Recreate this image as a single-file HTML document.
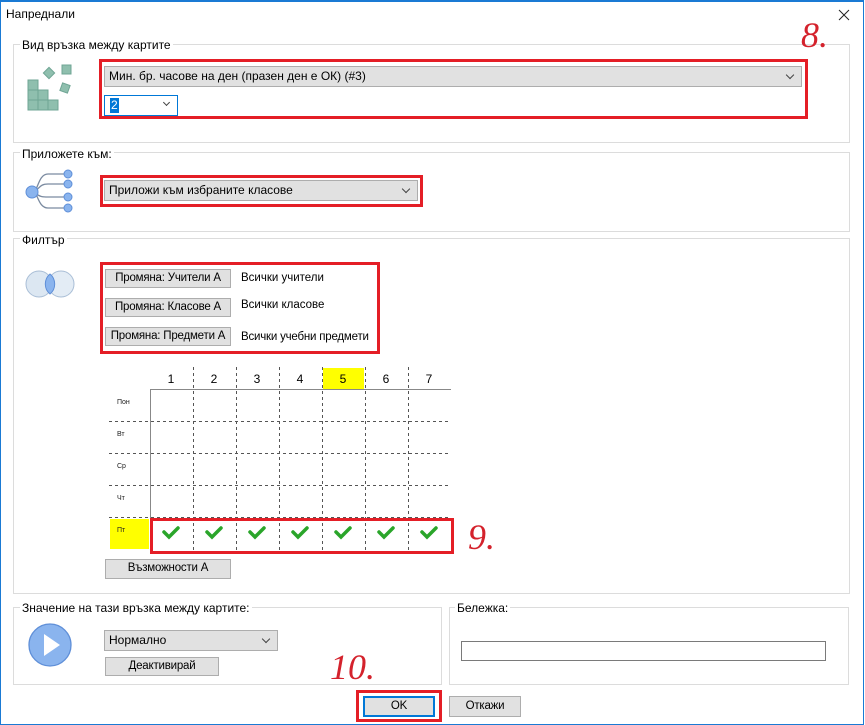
<!DOCTYPE html>
<html><head><meta charset="utf-8"><style>
*{box-sizing:border-box;margin:0;padding:0}
body{width:865px;height:725px;background:#fff;font-family:"Liberation Sans",sans-serif;font-size:12px;color:#000;position:relative;overflow:hidden}
.a{position:absolute}
.grp{position:absolute;border:1px solid #dcdcdc}
.lbl{position:absolute;background:#fff;padding:0 2px;font-size:12px;line-height:14px;white-space:nowrap}
.btn{position:absolute;background:#e1e1e1;border:1px solid #adadad;text-align:center;font-size:11.5px;line-height:17px;white-space:nowrap;letter-spacing:-0.2px}
.cmb{position:absolute;background:#e1e1e1;border:1px solid #adadad;font-size:12px;line-height:19px;padding-left:4px;white-space:nowrap}
.cmb:after{content:"";position:absolute;right:8px;top:5px;width:5px;height:5px;border-right:1px solid #444;border-bottom:1px solid #444;transform:rotate(45deg)}
.red{position:absolute;border:3px solid #e41e26}
.txt{position:absolute;font-size:12px;white-space:nowrap}
.num{position:absolute;font-family:"Liberation Serif",serif;font-style:italic;color:#d4222c;font-size:36px;line-height:30px}
</style></head><body>
<div class="a" style="left:0;top:0;width:864px;height:725px;border:1px solid #1a7ad4;border-top:2px solid #1a7ad4"></div>
<div class="txt" style="left:6px;top:7px">Напреднали</div>
<svg class="a" style="left:838px;top:9px" width="12" height="12"><path d="M1 1L11 11M11 1L1 11" stroke="#222" stroke-width="1"/></svg>

<div class="grp" style="left:13px;top:44px;width:837px;height:99px"></div>
<div class="lbl" style="left:20px;top:38px">Вид връзка между картите</div>
<svg class="a" style="left:20px;top:60px" width="60" height="55" viewBox="20 60 60 55">
<g fill="#8fbfae" stroke="#6fa594" stroke-width="1">
<rect x="28" y="80" width="10" height="10"/><rect x="28" y="90" width="10" height="10"/><rect x="28" y="100" width="10" height="10"/>
<rect x="38" y="90" width="10" height="10"/><rect x="38" y="100" width="10" height="10"/><rect x="48" y="100" width="10" height="10"/>
<rect x="62" y="65" width="9" height="9"/>
<rect x="45" y="69" width="8" height="8" transform="rotate(45 49 73)"/>
<rect x="61" y="84" width="8" height="8" transform="rotate(20 65 88)"/>
</g></svg>
<div class="red" style="left:99px;top:59px;width:709px;height:60px"></div>
<div class="cmb" style="left:104px;top:66px;width:698px;height:21px">Мин. бр. часове на ден (празен ден е ОК) (#3)</div>
<div class="a" style="left:104px;top:95px;width:74px;height:21px;border:1px solid #0078d7;background:#fff"></div>
<div class="a" style="left:110px;top:98px;height:15px;background:#0078d7;color:#fff;font-size:12px;line-height:15px;padding:0 1px">2</div>
<div class="a" style="left:164px;top:100px;width:5px;height:5px;border-right:1px solid #444;border-bottom:1px solid #444;transform:rotate(45deg)"></div>
<div class="num" style="left:801px;top:20px">8.</div>

<div class="grp" style="left:13px;top:152px;width:837px;height:80px"></div>
<div class="lbl" style="left:20px;top:147px">Приложете към:</div>
<svg class="a" style="left:20px;top:165px" width="60" height="50" viewBox="20 165 60 50">
<g fill="none" stroke="#7a8aa0" stroke-width="1.3">
<path d="M33 192 C38 192 38 174 48 174 H68"/><path d="M36 190 C40 188 40 184 48 184 H68"/><path d="M36 194 C40 196 40 197 48 197 H68"/><path d="M33 192 C38 192 38 208 48 208 H68"/>
</g>
<g fill="#8ab4ee" stroke="#5f8fd8"><circle cx="32" cy="192" r="6"/><circle cx="68" cy="174" r="4"/><circle cx="68" cy="184" r="4"/><circle cx="68" cy="197" r="4"/><circle cx="68" cy="208" r="4"/></g></svg>
<div class="red" style="left:100px;top:175px;width:323px;height:32px"></div>
<div class="cmb" style="left:104px;top:180px;width:314px;height:21px">Приложи към избраните класове</div>

<div class="grp" style="left:13px;top:238px;width:837px;height:356px"></div>
<div class="lbl" style="left:20px;top:233px">Филтър</div>
<svg class="a" style="left:24px;top:268px" width="52" height="32" viewBox="24 268 52 32">
<circle cx="39" cy="284" r="13" fill="#dce7f2" stroke="#a9bed6"/><circle cx="61" cy="284" r="13" fill="#dce7f2" stroke="#a9bed6" fill-opacity=".8"/>
<path d="M50 274 A13 13 0 0 1 50 294 A13 13 0 0 1 50 274Z" fill="#8ab4ee" stroke="#5f8fd8"/></svg>
<div class="red" style="left:100px;top:262px;width:280px;height:92px"></div>
<div class="btn" style="left:105px;top:269px;width:126px;height:19px">Промяна: Учители A</div>
<div class="btn" style="left:105px;top:298px;width:126px;height:19px">Промяна: Класове A</div>
<div class="btn" style="left:105px;top:327px;width:126px;height:19px">Промяна: Предмети A</div>
<div class="txt" style="left:241px;top:272px;font-size:11.5px">Всички учители</div>
<div class="txt" style="left:241px;top:299px;font-size:11.5px">Всички класове</div>
<div class="txt" style="left:241px;top:331px;font-size:11.5px;letter-spacing:-0.2px">Всички учебни предмети</div>

<div class="a" style="left:323px;top:368px;width:41px;height:21px;background:#ffff00"></div>
<div class="a" style="left:110px;top:519px;width:39px;height:30px;background:#ffff00"></div>
<svg class="a" style="left:100px;top:360px" width="360" height="200" viewBox="100 360 360 200" font-family="Liberation Sans" font-size="12">
<g stroke="#555" stroke-dasharray="3,3" stroke-width="1">
<line x1="193.5" y1="367" x2="193.5" y2="550"/><line x1="236.5" y1="367" x2="236.5" y2="550"/><line x1="279.5" y1="367" x2="279.5" y2="550"/><line x1="322.5" y1="367" x2="322.5" y2="550"/><line x1="365.5" y1="367" x2="365.5" y2="550"/><line x1="408.5" y1="367" x2="408.5" y2="550"/>
<line x1="109" y1="421.5" x2="451" y2="421.5"/><line x1="109" y1="453.5" x2="451" y2="453.5"/><line x1="109" y1="485.5" x2="451" y2="485.5"/><line x1="109" y1="517.5" x2="451" y2="517.5"/>
</g>
<g stroke="#888"><line x1="150.5" y1="389" x2="150.5" y2="550"/><line x1="150" y1="389.5" x2="451" y2="389.5"/></g>
<g text-anchor="middle"><text x="171" y="383">1</text><text x="214" y="383">2</text><text x="257" y="383">3</text><text x="300" y="383">4</text><text x="343" y="383">5</text><text x="386" y="383">6</text><text x="429" y="383">7</text></g>
<g font-size="7" fill="#222"><text x="117" y="404">Пон</text><text x="117" y="436">Вт</text><text x="117" y="468">Ср</text><text x="117" y="500">Чт</text><text x="117" y="532">Пт</text></g>
<g fill="none" stroke="#2aa52a" stroke-width="3.5" stroke-linecap="round">
<path d="M164 532 l5 5 l9 -9"/><path d="M207 532 l5 5 l9 -9"/><path d="M250 532 l5 5 l9 -9"/><path d="M293 532 l5 5 l9 -9"/><path d="M336 532 l5 5 l9 -9"/><path d="M379 532 l5 5 l9 -9"/><path d="M422 532 l5 5 l9 -9"/>
</g></svg>
<div class="red" style="left:150px;top:518px;width:304px;height:36px"></div>
<div class="num" style="left:468px;top:522px">9.</div>
<div class="btn" style="left:105px;top:559px;width:126px;height:20px">Възможности A</div>

<div class="grp" style="left:13px;top:607px;width:429px;height:78px"></div>
<div class="lbl" style="left:20px;top:601px">Значение на тази връзка между картите:</div>
<svg class="a" style="left:28px;top:623px" width="45" height="45"><circle cx="22" cy="22" r="21" fill="#8ab4ee" stroke="#5f8fd8" stroke-width="1.3"/><path d="M16 11 L32 22 L16 33Z" fill="#fff"/></svg>
<div class="cmb" style="left:104px;top:630px;width:174px;height:21px">Нормално</div>
<div class="btn" style="left:105px;top:657px;width:114px;height:19px">Деактивирай</div>

<div class="grp" style="left:449px;top:607px;width:400px;height:78px"></div>
<div class="lbl" style="left:455px;top:601px">Бележка:</div>
<div class="a" style="left:461px;top:641px;width:365px;height:20px;border:1px solid #7a7a7a"></div>
<div class="num" style="left:330px;top:652px">10.</div>

<div class="red" style="left:356px;top:690px;width:86px;height:32px"></div>
<div class="btn" style="left:363px;top:696px;width:72px;height:21px;border:2px solid #0078d7;line-height:17px">OK</div>
<div class="btn" style="left:449px;top:696px;width:72px;height:21px;line-height:19px">Откажи</div>
</body></html>
